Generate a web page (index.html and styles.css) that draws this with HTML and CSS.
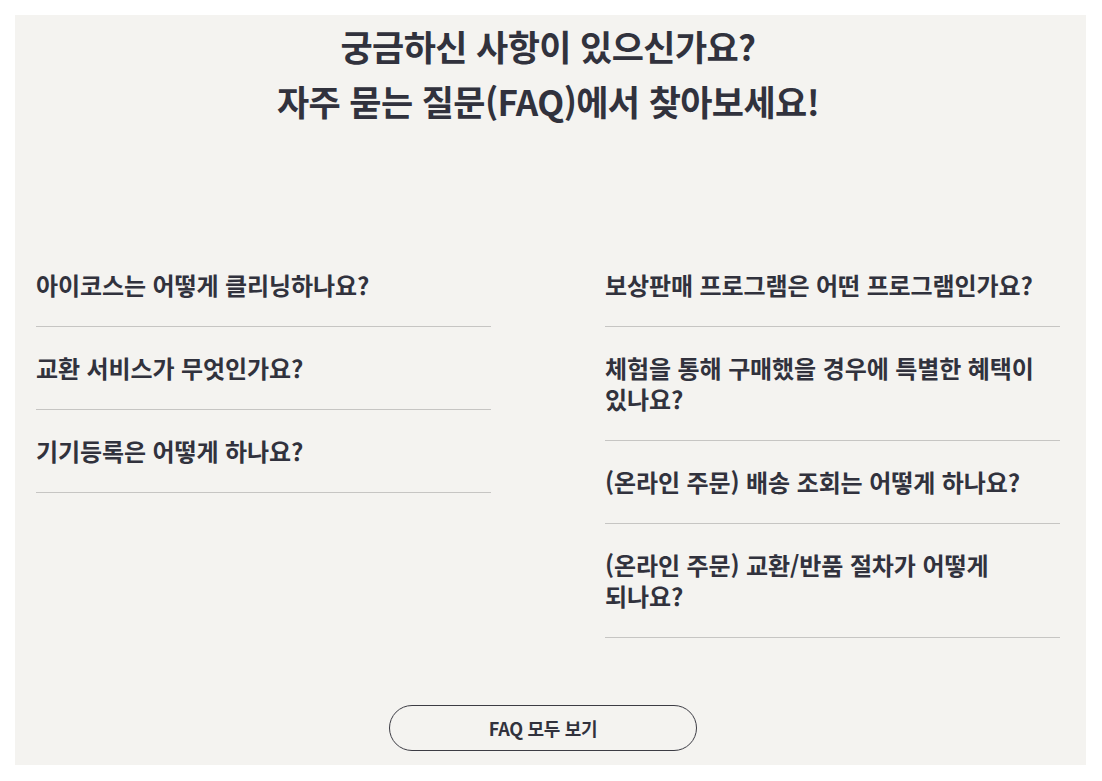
FILE: index.html
```html
<!DOCTYPE html>
<html lang="ko">
<head>
<meta charset="utf-8">
<title>FAQ</title>
<link rel="stylesheet" href="styles.css">
</head>
<body>
<section class="faq">
  <h2 class="faq-title">궁금하신 사항이 있으신가요?<br>자주 묻는 질문(FAQ)에서 찾아보세요!</h2>
  <div class="faq-cols">
    <ul class="faq-list">
      <li class="faq-item">아이코스는 어떻게 클리닝하나요?</li>
      <li class="faq-item">교환 서비스가 무엇인가요?</li>
      <li class="faq-item">기기등록은 어떻게 하나요?</li>
    </ul>
    <ul class="faq-list">
      <li class="faq-item">보상판매 프로그램은 어떤 프로그램인가요?</li>
      <li class="faq-item">체험을 통해 구매했을 경우에 특별한 혜택이 있나요?</li>
      <li class="faq-item">(온라인 주문) 배송 조회는 어떻게 하나요?</li>
      <li class="faq-item">(온라인 주문) 교환/반품 절차가 어떻게 되나요?</li>
    </ul>
  </div>
  <div class="faq-more">
    <a class="faq-btn" href="#">FAQ 모두 보기</a>
  </div>
</section>
</body>
</html>
```
FILE: styles.css
```css
html, body {
  margin: 0;
  padding: 0;
  background: #ffffff;
}
body {
  padding: 15px 16px 16px 15px;
  font-family: "Noto Sans CJK KR", "Noto Sans", sans-serif;
  color: #31323d;
}
.faq {
  background: #f4f3f0;
  height: 750px;
  box-sizing: border-box;
  padding: 3px 26px 0 21px;
  display: flex;
  flex-direction: column;
}
.faq-title {
  margin: 0;
  text-align: center;
  font-size: 35px;
  font-weight: 700;
  line-height: 55px;
  letter-spacing: -0.6px;
  word-break: keep-all;
}
.faq-cols {
  display: grid;
  grid-template-columns: 455px 455px;
  justify-content: space-between;
  align-items: start;
  margin-top: 116px;
}
.faq-list {
  list-style: none;
  margin: 0;
  padding: 0;
}
.faq-item {
  font-size: 24px;
  font-weight: 700;
  line-height: 31px;
  padding: 25px 0 26px;
  border-bottom: 1px solid #c6c5c3;
  letter-spacing: -0.1px;
  word-break: keep-all;
}
.faq-more {
  display: flex;
  justify-content: center;
  margin-top: auto;
  padding: 0 10px 14px 0;
}
.faq-btn {
  display: flex;
  align-items: center;
  justify-content: center;
  width: 308px;
  height: 46px;
  box-sizing: border-box;
  border: 1px solid #3c3c44;
  border-radius: 23px;
  font-size: 18px;
  font-weight: 700;
  color: #31323d;
  text-decoration: none;
  letter-spacing: -0.3px;
}
```
